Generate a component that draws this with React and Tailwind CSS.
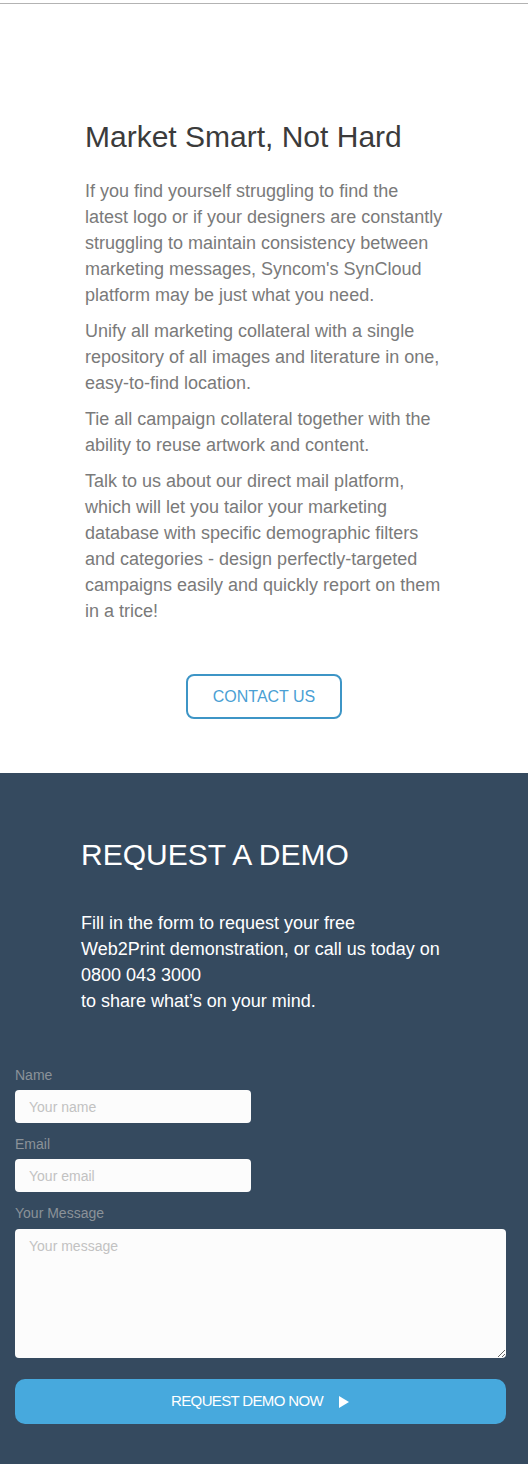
import { useEffect } from 'react'

function ContactSection()
{
    return (
        <section className="bg-white pt-[115px] pb-[54px]">
            <div className="ml-[85px] w-[359px]">
                <h1 className="text-[30px] leading-[36px] text-[#3b3b3b] font-normal">Market Smart, Not Hard</h1>
                <div className="mt-[23px] text-[18px] leading-[26px] text-[#7a7a7a] space-y-[10px]">
                    <p>If you find yourself struggling to find the latest logo or if your designers are constantly struggling to maintain consistency between marketing messages, Syncom's SynCloud platform may be just what you need.</p>
                    <p>Unify all marketing collateral with a single repository of all images and literature in one, easy-to-find location.</p>
                    <p>Tie all campaign collateral together with the ability to reuse artwork and content.</p>
                    <p>Talk to us about our direct mail platform, which will let you tailor your marketing database with specific demographic filters and categories - design perfectly-targeted campaigns easily and quickly report on them in a trice!</p>
                </div>
            </div>
            <div className="flex justify-center mt-[50px]">
                <a href="#" className="w-[156px] h-[45px] flex items-center justify-center border-2 border-[#3d95c6] rounded-[8px] text-[16px] text-[#4a9fd4]">CONTACT US</a>
            </div>
        </section>
    );
}

function DemoSection()
{
    return (
        <section className="bg-[#354a5f] pt-[64px] pb-[41px]">
            <div className="ml-[81px] w-[360px]">
                <h2 className="text-[30px] leading-[36px] text-white font-normal">REQUEST A DEMO</h2>
                <p className="mt-[37px] text-[18px] leading-[26px] text-white">
                    Fill in the form to request your free Web2Print demonstration, or call us today on 0800 043 3000<br />to share what’s on your mind.
                </p>
            </div>

            <form className="mt-[53px] pl-[15px] pr-[22px] flex flex-col text-[14px]" onSubmit={e => e.preventDefault()}>
                <label className="text-[#8b9299] leading-[16px]">Name</label>
                <input className="mt-[7px] w-[236px] h-[33px] rounded-[4px] bg-[#fcfcfc] px-[14px] text-[14px] placeholder:text-[#c2c2c2] outline-none" placeholder="Your name" />

                <label className="mt-[13px] text-[#8b9299] leading-[16px]">Email</label>
                <input className="mt-[7px] w-[236px] h-[33px] rounded-[4px] bg-[#fcfcfc] px-[14px] text-[14px] placeholder:text-[#c2c2c2] outline-none" placeholder="Your email" />

                <label className="mt-[13px] text-[#8b9299] leading-[16px]">Your Message</label>
                <textarea className="mt-[8px] w-full h-[129px] rounded-[4px] bg-[#fcfcfc] px-[14px] py-[7px] text-[14px] leading-[20px] placeholder:text-[#c2c2c2] outline-none" placeholder="Your message" />

                <button type="submit" className="mt-[21px] w-full h-[45px] rounded-[10px] bg-[#47a9dd] flex items-center justify-center text-white">
                    <span className="text-[15px] tracking-[-0.65px]">REQUEST DEMO NOW</span>
                    <svg className="ml-[15px]" width="12" height="12" viewBox="0 0 12 12"><path d="M1 0 L11 6 L1 12 Z" fill="white" /></svg>
                </button>
            </form>
        </section>
    );
}

function App()
{
    useEffect(() => {
        document.title = "Request A Demo - Syncom";
    }, []);

    return (
        <div className="font-['Liberation_Sans',Arial,sans-serif] bg-white">
            <div className="h-[3px] bg-white"></div>
            <div className="h-px bg-[#b3b3b3]"></div>
            <ContactSection />
            <DemoSection />
        </div>
    );
}

export default App
